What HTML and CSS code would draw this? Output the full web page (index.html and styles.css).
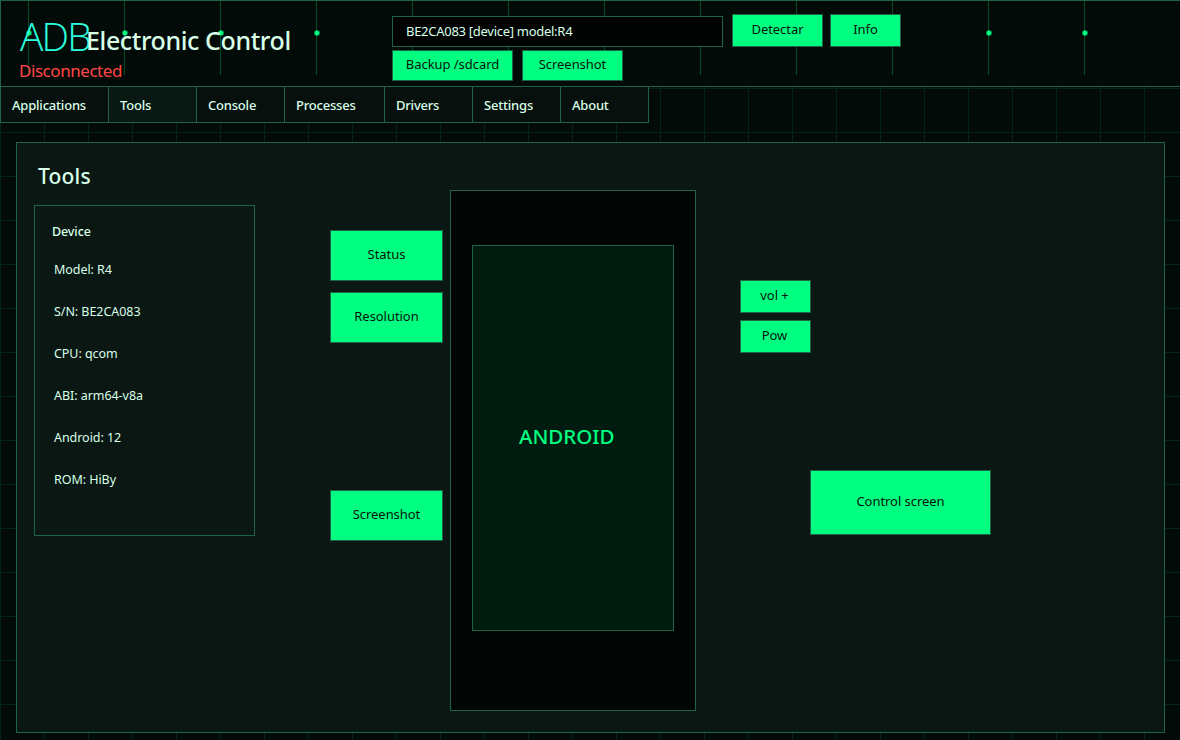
FILE: index.html
```
<!DOCTYPE html>
<html lang="en">
<head>
    <meta charset="utf-8">
    <title>ADB Electronic Control</title>
    <link rel="stylesheet" href="styles.css">
</head>
<body>
    <header class="header">
        <div class="brand">
            <div class="brand-title">
                <span class="logo">ADB</span>
                <h1>Electronic Control</h1>
            </div>
            <p class="status">Disconnected</p>
        </div>
        <div class="device-bar">
            <div class="device-row">
                <input class="device-input" type="text" value="BE2CA083 [device] model:R4">
                <button class="btn btn-detect">Detectar</button>
                <button class="btn btn-info">Info</button>
            </div>
            <div class="device-row second">
                <button class="btn btn-backup">Backup /sdcard</button>
                <button class="btn btn-shot">Screenshot</button>
            </div>
        </div>
    </header>

    <nav class="tabs">
        <a class="tab tab-first">Applications</a>
        <a class="tab active">Tools</a>
        <a class="tab">Console</a>
        <a class="tab tab-wide">Processes</a>
        <a class="tab">Drivers</a>
        <a class="tab">Settings</a>
        <a class="tab">About</a>
    </nav>

    <main class="panel">
        <section class="info">
            <h2>Tools</h2>
            <div class="device-card">
                <h3>Device</h3>
                <ul>
                    <li>Model: R4</li>
                    <li>S/N: BE2CA083</li>
                    <li>CPU: qcom</li>
                    <li>ABI: arm64-v8a</li>
                    <li>Android: 12</li>
                    <li>ROM: HiBy</li>
                </ul>
            </div>
        </section>

        <section class="actions">
            <button class="btn">Status</button>
            <button class="btn">Resolution</button>
            <button class="btn btn-capture">Screenshot</button>
        </section>

        <section class="phone">
            <div class="screen"><span>ANDROID</span></div>
        </section>

        <section class="keys">
            <button class="btn btn-key">vol +</button>
            <button class="btn btn-key">Pow</button>
            <button class="btn btn-control">Control screen</button>
        </section>
    </main>
</body>
</html>
```
FILE: styles.css
```
* {
    box-sizing: border-box;
}

body {
    margin: 0;
    width: 1180px;
    height: 740px;
    overflow: hidden;
    color: #d8ffe8;
    font-family: "Noto Sans", "Open Sans", sans-serif;
    font-size: 13px;
    background-color: #030b08;
    background-image:
        linear-gradient(to right, #042416 1px, transparent 1px),
        linear-gradient(to bottom, #042416 1px, transparent 1px);
    background-size: 44px 44px;
}

h1, h2, h3, p, ul {
    margin: 0;
    padding: 0;
}

/* header with circuit lines, no dot at the right edge */
.header {
    display: flex;
    height: 87px;
    border: 1px solid #1f6347;
    border-right: none;
    background-color: #030b09;
    background-image:
        linear-gradient(#030b09, #030b09),
        radial-gradient(circle at 48.5px 32px, #00ff80 2.2px, transparent 3px),
        linear-gradient(to right, #004d26 1px, transparent 1px);
    background-position: right top, -20.5px 0, 27px 0;
    background-size: 20px 100%, 96px 74px, 96px 74px;
    background-repeat: no-repeat, repeat-x, repeat-x;
}

.brand {
    width: 391px;
    padding: 8px 0 0 18px;
}

.brand-title {
    display: flex;
    height: 51px;
    padding-left: 1px;
    white-space: nowrap;
}

.logo {
    width: 66px;
    color: #2bffde;
    font-family: "Open Sans", "Noto Sans", sans-serif;
    font-size: 39px;
    font-weight: 300;
    line-height: 54px;
    letter-spacing: -1.8px;
}

h1 {
    font-size: 25px;
    font-weight: 500;
    line-height: 62px;
    letter-spacing: -0.4px;
}

.status {
    color: #ff4646;
    font-size: 17px;
    line-height: 22px;
    letter-spacing: -0.45px;
}

.device-row {
    display: flex;
    align-items: flex-end;
    padding-top: 13px;
}

.device-row.second {
    gap: 9px;
    padding-top: 3px;
}

.device-input {
    width: 331px;
    height: 31px;
    padding: 0 13px 2px;
    border: 1px solid #1f6347;
    background: #010403;
    color: #d8ffe8;
    font: inherit;
    letter-spacing: -0.28px;
    outline: none;
}

.btn {
    width: 113px;
    height: 51px;
    padding: 0 0 3px;
    border: 1px solid #1f6347;
    background: #00ff80;
    color: #03150d;
    font: inherit;
    letter-spacing: -0.05px;
    white-space: nowrap;
}

.btn-detect {
    width: 91px;
    height: 33px;
    margin: 0 7px 0 9px;
}

.btn-info {
    width: 71px;
    height: 33px;
}

.btn-backup {
    width: 121px;
    height: 31px;
}

.btn-shot {
    width: 101px;
    height: 31px;
}

/* tabs */
.tabs {
    display: flex;
    height: 36px;
    width: 649px;
    border-left: 1px solid #1f6347;
}

.tab {
    width: 88px;
    padding-left: 11px;
    border-right: 1px solid #1f6347;
    border-bottom: 1px solid #1f6347;
    background: #07100d;
    font-weight: 500;
    line-height: 37px;
    letter-spacing: -0.2px;
}

.tab.active {
    background: #0a1813;
}

.tab-first {
    width: 108px;
}

.tab-wide {
    width: 100px;
}

/* main panel */
.panel {
    display: flex;
    width: 1149px;
    height: 591px;
    margin: 19px 0 0 16px;
    padding-left: 17px;
    border: 1px solid #1f6347;
    background: #0a1713;
}

.info {
    width: 221px;
    margin-right: 75px;
}

h2 {
    height: 62px;
    padding-left: 4px;
    font-size: 21px;
    font-weight: 500;
    line-height: 67px;
    letter-spacing: 0.2px;
}

.device-card {
    height: 331px;
    padding: 15px 17px;
    border: 1px solid #1f6347;
}

h3 {
    font-size: 12.5px;
    font-weight: 500;
    line-height: 22px;
    letter-spacing: -0.1px;
}

.device-card ul {
    padding: 6px 0 0 2px;
    list-style: none;
    font-size: 12.5px;
    line-height: 42px;
    letter-spacing: -0.05px;
}

.actions {
    display: flex;
    flex-direction: column;
    gap: 11px;
    margin-right: 7px;
    padding-top: 87px;
}

.btn-capture {
    margin-top: 136px;
}

.phone {
    width: 246px;
    height: 521px;
    margin: 47px 44px 0 0;
    padding: 54px 21px;
    border: 1px solid #1f6347;
    background: #010504;
}

.screen {
    width: 202px;
    height: 386px;
    padding: 176px 0 0 46px;
    border: 1px solid #1f6347;
    background: #001b10;
    color: #00ff80;
    font-size: 20.5px;
    font-weight: 500;
    line-height: 28px;
}

.keys {
    display: flex;
    flex-direction: column;
    gap: 7px;
    padding-top: 137px;
}

.btn-key {
    width: 71px;
    height: 33px;
    padding-right: 2px;
}

.btn-control {
    width: 181px;
    height: 65px;
    margin: 110px 0 0 70px;
}
```
